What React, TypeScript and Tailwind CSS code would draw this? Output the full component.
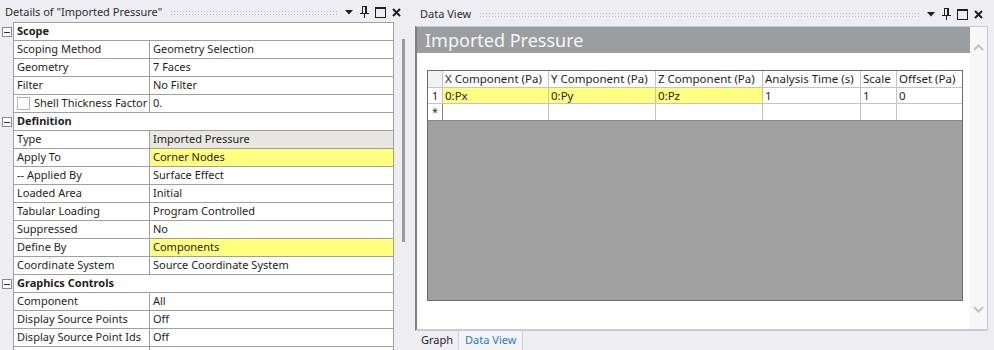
import type { ReactNode } from 'react'

type PropRow =
  | { kind: 'header'; label: string }
  | { kind: 'prop'; label: string; value: string; tone?: 'yellow' | 'gray'; check?: boolean }

const rows: PropRow[] = [
  { kind: 'header', label: 'Scope' },
  { kind: 'prop', label: 'Scoping Method', value: 'Geometry Selection' },
  { kind: 'prop', label: 'Geometry', value: '7 Faces' },
  { kind: 'prop', label: 'Filter', value: 'No Filter' },
  { kind: 'prop', label: 'Shell Thickness Factor', value: '0.', check: true },
  { kind: 'header', label: 'Definition' },
  { kind: 'prop', label: 'Type', value: 'Imported Pressure', tone: 'gray' },
  { kind: 'prop', label: 'Apply To', value: 'Corner Nodes', tone: 'yellow' },
  { kind: 'prop', label: '-- Applied By', value: 'Surface Effect' },
  { kind: 'prop', label: 'Loaded Area', value: 'Initial' },
  { kind: 'prop', label: 'Tabular Loading', value: 'Program Controlled' },
  { kind: 'prop', label: 'Suppressed', value: 'No' },
  { kind: 'prop', label: 'Define By', value: 'Components', tone: 'yellow' },
  { kind: 'prop', label: 'Coordinate System', value: 'Source Coordinate System' },
  { kind: 'header', label: 'Graphics Controls' },
  { kind: 'prop', label: 'Component', value: 'All' },
  { kind: 'prop', label: 'Display Source Points', value: 'Off' },
  { kind: 'prop', label: 'Display Source Point Ids', value: 'Off' },
  { kind: 'prop', label: '', value: '' },
]

const columns = [
  { w: 'w-[106px]', head: 'X Component (Pa)', val: '0:Px', yellow: true },
  { w: 'w-[107px]', head: 'Y Component (Pa)', val: '0:Py', yellow: true },
  { w: 'w-[107px]', head: 'Z Component (Pa)', val: '0:Pz', yellow: true },
  { w: 'w-[98px]', head: 'Analysis Time (s)', val: '1', yellow: false },
  { w: 'w-[36px]', head: 'Scale', val: '1', yellow: false },
  { w: 'flex-1', head: 'Offset (Pa)', val: '0', yellow: false },
]

function TitleIcons() {
  return (
    <div className="flex items-center text-[#1e1e1e]">
      <svg width="8" height="5" viewBox="0 0 8 5" className="mr-[7px]">
        <path d="M0 0h8L4 4.5z" fill="currentColor" />
      </svg>
      <svg width="9" height="12" viewBox="0 0 9 12" className="mr-[6px]">
        <path d="M2 0h5v1H2zM2 1h1v6H2zM5 1h2v6H5zM0 7h9v1H0zM4 8h1v4H4z" fill="currentColor" />
      </svg>
      <svg width="11" height="11" viewBox="0 0 11 11" className="mr-[6px]">
        <path d="M0 0h11v2H0z" fill="currentColor" />
        <rect x="0.5" y="0.5" width="10" height="10" fill="none" stroke="currentColor" />
      </svg>
      <svg width="9" height="9" viewBox="0 0 9 9">
        <path d="M1 1l7 7M8 1L1 8" stroke="currentColor" strokeWidth="2" />
      </svg>
    </div>
  )
}

function Grip() {
  return (
    <div className="mx-[8px] h-[5px] flex-1 bg-[radial-gradient(circle,#b9b9c2_0.7px,transparent_0.9px)] bg-[length:3px_3px]" />
  )
}

function MinusBox() {
  return (
    <div className="flex h-[10px] w-[10px] items-center justify-center border border-[#8a8a8a] bg-white">
      <div className="h-px w-[6px] bg-[#333]" />
    </div>
  )
}

function Cell({ className, children }: { className?: string; children?: ReactNode }) {
  return <div className={`flex h-full items-center overflow-hidden whitespace-nowrap ${className ?? ''}`}>{children}</div>
}

function DetailsPanel() {
  return (
    <div className="flex w-[410px] flex-col">
      <div className="flex h-[22px] items-center pl-[5px] pr-[9px] pt-[2px] text-[#2d2d2d]">
        <span>Details of "Imported Pressure"</span>
        <Grip />
        <TitleIcons />
      </div>
      <div className="flex h-[328px] overflow-hidden">
        <div className="w-[394px]">
          <div className="ml-[13px] h-px w-[381px] bg-[#a0a0a0]" />
          {rows.map((row, i) => (
            <div key={i} className="flex h-[18px]">
              <div className="flex w-[13px] items-center pl-[2px]">
                {row.kind === 'header' && <MinusBox />}
              </div>
              <div className="flex w-[381px] border-b border-l border-r border-[#a0a0a0] bg-white">
                {row.kind === 'header' ? (
                  <Cell className="pl-[3px] font-bold">{row.label}</Cell>
                ) : (
                  <>
                    <Cell className="w-[136px] border-r border-[#a0a0a0] pl-[3px]">
                      {row.check && <div className="mr-[4px] h-[13px] w-[13px] border border-[#b4b4b4] bg-white" />}
                      {row.label}
                    </Cell>
                    <Cell
                      className={`flex-1 pl-[3px] ${
                        row.tone === 'yellow' ? 'bg-[#ffff80]' : row.tone === 'gray' ? 'bg-[#e8e7e4]' : ''
                      }`}
                    >
                      {row.value}
                    </Cell>
                  </>
                )}
              </div>
            </div>
          ))}
        </div>
        <div className="flex w-[16px] justify-center pl-[2px] pt-[17px]">
          <div className="h-[203px] w-[3px] bg-[#9b9b9b]" />
        </div>
      </div>
    </div>
  )
}

function DataPanel() {
  return (
    <div className="ml-[5px] flex w-[576px] flex-col">
      <div className="flex h-[26px] items-center pl-[5px] pr-[8px] pt-[2px] text-[#2d2d2d]">
        <span>Data View</span>
        <Grip />
        <TitleIcons />
      </div>
      <div className="flex h-[305px] w-[573px] border border-b-2 border-l-2 border-[#c9cad6] border-l-[#7f7f7f] bg-white">
        <div className="flex flex-1 flex-col">
          <div className="flex h-[26px] items-center bg-[#9b9ea1] pl-[8px] text-[18px] leading-none text-[#f5f5f5]">
            Imported Pressure
          </div>
          <div className="ml-[10px] mt-[17px] flex h-[231px] w-[536px] flex-col border border-[#6b6b6b] bg-[#a0a0a0] text-[11.5px]">
            <div className="flex h-[17px] border-b border-[#c4c4c4] bg-white">
              <div className="w-[15px] border-r border-[#c4c4c4] bg-[#f2f2f2]" />
              {columns.map((c) => (
                <Cell key={c.head} className={`${c.w} border-r border-[#c4c4c4] pl-[2px] last:border-r-0`}>
                  {c.head}
                </Cell>
              ))}
            </div>
            <div className="flex h-[16px] border-b border-[#c4c4c4] bg-white">
              <Cell className="w-[15px] justify-center border-r border-[#c4c4c4]">1</Cell>
              {columns.map((c) => (
                <Cell
                  key={c.head}
                  className={`${c.w} border-r border-[#c4c4c4] pl-[2px] last:border-r-0 ${c.yellow ? 'bg-[#ffff80]' : ''}`}
                >
                  {c.val}
                </Cell>
              ))}
            </div>
            <div className="flex h-[17px] border-b border-[#8a8a8a] bg-white">
              <Cell className="w-[15px] items-start justify-center border-r border-[#8a8a8a] pt-[1px] text-[10px]">*</Cell>
              {columns.map((c) => (
                <Cell key={c.head} className={`${c.w} border-r border-[#c4c4c4] last:border-r-0`} />
              ))}
            </div>
          </div>
        </div>
        <div className="flex w-[17px] flex-col items-center justify-between bg-[#f7f7f7] pb-[16px] pt-[17px]">
          <svg width="11" height="7" viewBox="0 0 11 7">
            <path d="M1 6l4.5-4.5L10 6" fill="none" stroke="#c2c2c2" strokeWidth="2" />
          </svg>
          <svg width="11" height="7" viewBox="0 0 11 7">
            <path d="M1 1l4.5 4.5L10 1" fill="none" stroke="#c2c2c2" strokeWidth="2" />
          </svg>
        </div>
      </div>
      <div className="flex h-[19px] items-stretch pl-[6px]">
        <div className="flex items-center pr-[5px]">Graph</div>
        <div className="flex items-center border-l border-r border-[#cfd0dc] bg-[#f4f4f6] px-[6px] text-[#1f7ad2]">Data View</div>
      </div>
    </div>
  )
}

export default function App() {
  return (
    <div className="flex h-[350px] w-[994px] overflow-hidden bg-[#eeeef2] font-['Noto_Sans',sans-serif] text-[11px] text-[#1e1e1e]">
      <DetailsPanel />
      <DataPanel />
    </div>
  )
}
